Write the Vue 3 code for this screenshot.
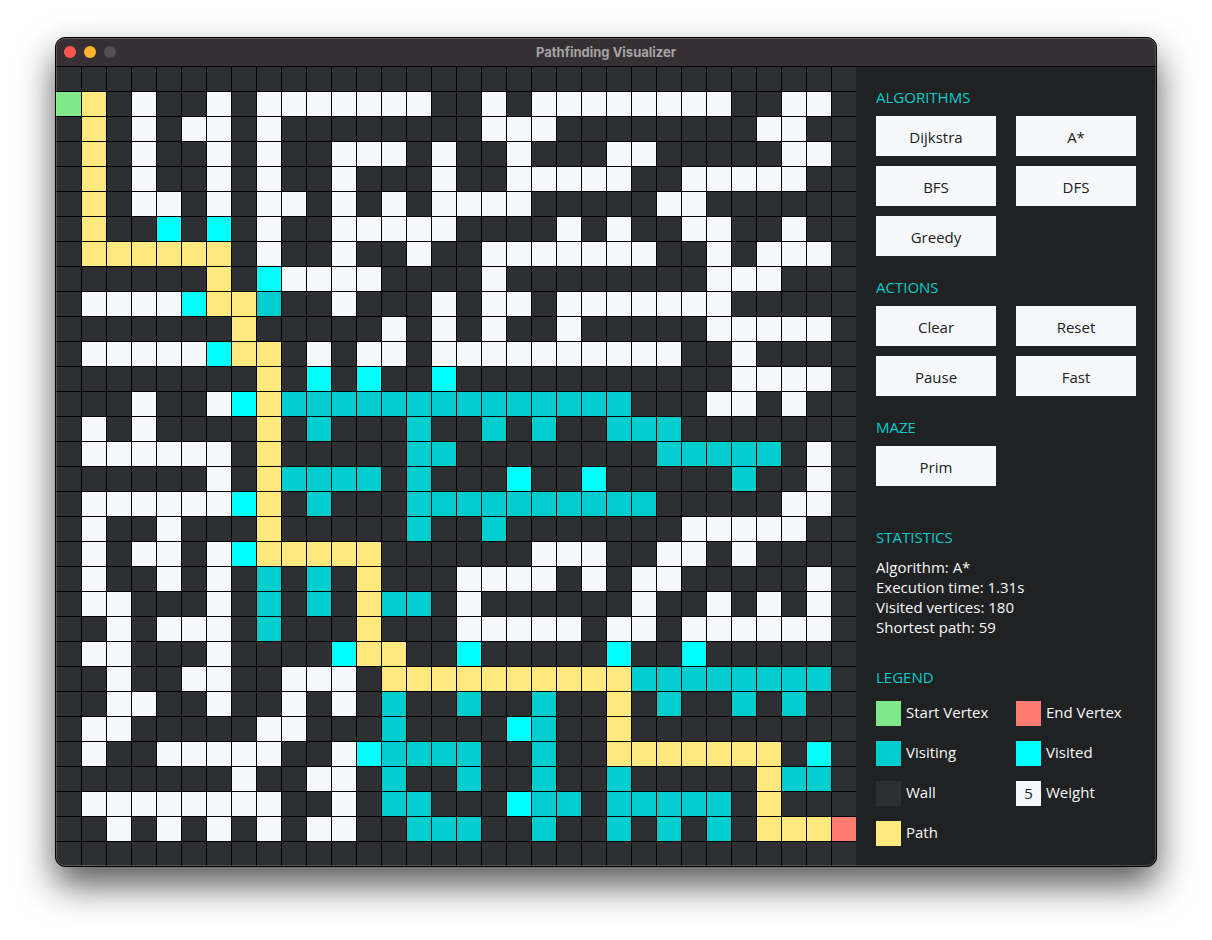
<script setup>
import { computed } from 'vue'

const SIZE = 32

const KINDS = {
  S: 'start',
  E: 'end',
  V: 'visiting',
  O: 'visited',
  P: 'path',
  W: 'weight',
}

// One entry per row: kind letter followed by a column or a column range.
// Every column that is not listed is a wall.
const rows = [
  '',
  'S0 P1 W3 W6 W8-14 W17 W19-26 W29-30',
  'P1 W3 W5-6 W8 W17-19 W28-29',
  'P1 W3 W6 W8 W11-13 W15 W18 W22-23 W29-30',
  'P1 W3 W6 W8 W11 W15 W18-22 W25-29',
  'P1 W3-4 W6 W8-9 W11 W13 W15-18 W24-25',
  'P1 O4 O6 W8 W11-15 W20 W22 W25-26 W29',
  'P1-6 W8 W11 W14 W17-23 W26 W28-30',
  'P6 O8 W9-12 W17 W26-28',
  'W1-4 O5 P6-7 V8 W11 W15 W17-18 W20-26',
  'P7 W13 W15 W17 W20 W26-30',
  'W1-5 O6 P7-8 W10 W12-13 W15-24 W27',
  'P8 O10 O12 O15 W27-30',
  'W3 W6 O7 P8 V9-22 W26-27 W29',
  'W1 W3 P8 V10 V14 V17 V19 V22-24',
  'W1-6 P8 V14-15 V24-28 W30',
  'W6 P8 V9-12 V14 O18 O21 V27 W30',
  'W1-6 O7 P8 V10 V14-23 W29-30',
  'W1 W4 P8 V14 V17 W25-29',
  'W1 W3-4 W6 O7 P8-12 W19-21 W24-25 W27',
  'W1 W4 W6 V8 V10 P12 W16-19 W21 W23-24 W30',
  'W1-2 W6 V8 V10 P12 V13-14 W16 W23 W26 W28 W30',
  'W2 W4-6 V8 P12 W16-20 W22-23 W25-30',
  'W1-2 W6 O11 P12-13 O16 O22 O25',
  'W2 W5-6 W9-11 P13-22 V23-30',
  'W2-3 W6 W9 W11 V13 V16 V19 P22 V24 V27 V29',
  'W1-2 W8-9 V13 O18 V19 P22',
  'W1 W4-8 W11 O12 V13-16 V19 P22-28 O30',
  'W7 W10-11 V13 V16 V19 V22 P28 V29-30',
  'W1-8 W11 V13-14 O18 V19-20 V22-26 P28',
  'W2 W4 W6 W8 W10-11 V14-16 V19 V22 V24 V26 P28-30 E31',
  '',
]

const cells = computed(() =>
  rows.flatMap((row) => {
    const line = Array(SIZE).fill('wall')
    for (const run of row.split(' ').filter(Boolean)) {
      const [from, to = from] = run.slice(1).split('-').map(Number)
      line.fill(KINDS[run[0]], from, to + 1)
    }
    return line
  }),
)

const groups = [
  { title: 'ALGORITHMS', buttons: ['Dijkstra', 'A*', 'BFS', 'DFS', 'Greedy'] },
  { title: 'ACTIONS', buttons: ['Clear', 'Reset', 'Pause', 'Fast'] },
  { title: 'MAZE', buttons: ['Prim'] },
]

const statistics = [
  'Algorithm: A*',
  'Execution time: 1.31s',
  'Visited vertices: 180',
  'Shortest path: 59',
]

const legend = [
  { kind: 'start', label: 'Start Vertex' },
  { kind: 'end', label: 'End Vertex' },
  { kind: 'visiting', label: 'Visiting' },
  { kind: 'visited', label: 'Visited' },
  { kind: 'wall', label: 'Wall' },
  { kind: 'weight', label: 'Weight', value: 5 },
  { kind: 'path', label: 'Path' },
]
</script>

<template>
  <div class="desktop">
    <div class="window">
      <header class="titlebar">
        <div class="lights">
          <button class="light close" type="button" aria-label="Close"></button>
          <button class="light minimize" type="button" aria-label="Minimize"></button>
          <button class="light zoom" type="button" aria-label="Zoom" disabled></button>
        </div>
        <h1 class="title">Pathfinding Visualizer</h1>
      </header>

      <main class="content">
        <div class="board" role="img" aria-label="Maze grid">
          <div v-for="(kind, i) in cells" :key="i" class="cell" :class="kind"></div>
        </div>

        <aside class="panel">
          <section v-for="group in groups" :key="group.title" class="group">
            <h2 class="heading">{{ group.title }}</h2>
            <div class="buttons">
              <button v-for="name in group.buttons" :key="name" class="button" type="button">
                {{ name }}
              </button>
            </div>
          </section>

          <section class="statistics">
            <h2 class="heading">STATISTICS</h2>
            <p v-for="line in statistics" :key="line" class="stat">{{ line }}</p>
          </section>

          <section class="legend">
            <h2 class="heading">LEGEND</h2>
            <ul class="entries">
              <li v-for="item in legend" :key="item.kind" class="entry">
                <span class="swatch" :class="item.kind">{{ item.value }}</span>
                <span>{{ item.label }}</span>
              </li>
            </ul>
          </section>
        </aside>
      </main>
    </div>
  </div>
</template>

<style>
body {
  margin: 0;
  background: #ffffff;
}
</style>

<style scoped>
.desktop {
  padding: 37px 55px 60px;
  font-family: 'Open Sans', 'Noto Sans', sans-serif;
  font-size: 15px;
  line-height: 22px;
}

.window {
  position: relative;
  border: 1px solid #000000;
  border-radius: 10px;
  overflow: hidden;
  background: #202122;
  box-shadow: 0 18px 36px rgba(0, 0, 0, 0.66);
}

.window::after {
  content: '';
  position: absolute;
  inset: 0;
  border-radius: 9px;
  box-shadow: inset 0 0 0 1px rgba(255, 255, 255, 0.2);
  pointer-events: none;
}

.titlebar {
  display: grid;
  grid-template-columns: 1fr auto 1fr;
  align-items: center;
  height: 28px;
  padding: 0 8px;
  background: #362f33;
}

.lights {
  display: flex;
  gap: 8px;
}

.light {
  width: 12px;
  height: 12px;
  padding: 0;
  border: 0;
  border-radius: 50%;
}

.close {
  background: #ff564f;
}

.minimize {
  background: #ffb52f;
}

.zoom {
  background: #544d52;
}

.title {
  margin: 0;
  font-family: Inter, 'Liberation Sans', sans-serif;
  font-size: 13px;
  font-weight: 700;
  color: #a7a3a5;
}

.content {
  display: flex;
  align-items: stretch;
}

.board {
  flex: 1;
  display: grid;
  grid-template-columns: repeat(32, 1fr);
  grid-template-rows: repeat(32, 1fr);
  aspect-ratio: 1;
  align-self: flex-start;
}

.cell {
  border-top: 1px solid #000000;
  border-left: 1px solid #000000;
}

.cell:nth-child(32n + 1) {
  border-left: 0;
}

.start {
  background: #7fe888;
}

.end {
  background: #ff7a70;
}

.visiting {
  background: #00cdcd;
}

.visited {
  background: #00ffff;
}

.wall {
  background: #2e2f33;
}

.weight {
  background: #f7f8fb;
}

.path {
  background: #ffe97f;
}

.panel {
  box-sizing: border-box;
  flex: none;
  width: 300px;
  padding: 19px 20px;
  border-top: 1px solid #000000;
  color: #f7f8fb;
}

.heading {
  margin: 0 0 8px;
  font-size: 15px;
  font-weight: 400;
  color: #00cdcd;
}

.group {
  margin-bottom: 20px;
}

.buttons {
  display: grid;
  grid-template-columns: 1fr 1fr;
  gap: 10px 20px;
}

.button {
  height: 40px;
  padding: 2px 0 0;
  border: 0;
  background: #f7f8fb;
  color: #202122;
  font: inherit;
}

.statistics {
  margin: 40px 0 29px;
}

.statistics .heading {
  margin-bottom: 9px;
}

.stat {
  margin: 0;
  line-height: 20px;
}

.entries {
  display: grid;
  grid-template-columns: 1fr 1fr;
  gap: 15px 20px;
  margin: 13px 0 0;
  padding: 0;
  list-style: none;
}

.entry {
  display: flex;
  gap: 5px;
  white-space: nowrap;
}

.swatch {
  width: 25px;
  height: 25px;
  line-height: 24px;
  text-align: center;
  color: #202122;
}
</style>
